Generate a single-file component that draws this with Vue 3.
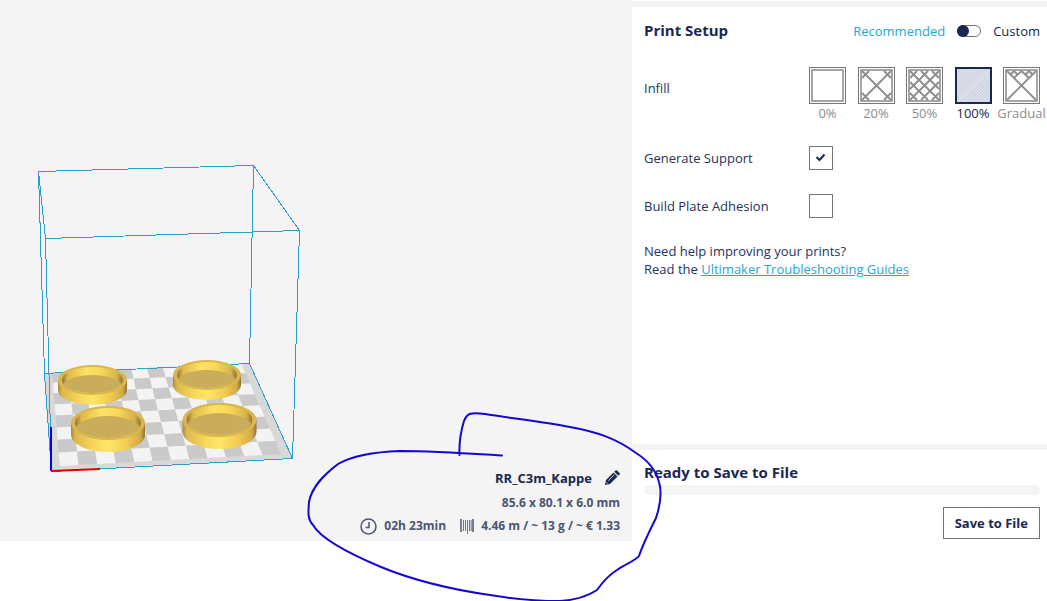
<template>
  <div class="page">
    <section class="viewport">
      <svg class="scene" width="310" height="480" viewBox="0 0 310 480" role="img" aria-label="Build plate">
        <defs>
          <linearGradient id="wall">
            <stop offset="0" stop-color="#a88a3c" />
            <stop offset="0.06" stop-color="#dcb84c" />
            <stop offset="0.3" stop-color="#f6d65a" />
            <stop offset="0.5" stop-color="#ffe668" />
            <stop offset="0.75" stop-color="#f2cc50" />
            <stop offset="0.94" stop-color="#d0aa47" />
            <stop offset="1" stop-color="#8d7236" />
          </linearGradient>
          <linearGradient id="inner">
            <stop offset="0" stop-color="#8d7236" />
            <stop offset="0.1" stop-color="#e0ba4c" />
            <stop offset="0.4" stop-color="#fde265" />
            <stop offset="0.65" stop-color="#f8d85a" />
            <stop offset="0.9" stop-color="#d8b24a" />
            <stop offset="1" stop-color="#8d7236" />
          </linearGradient>
          <clipPath v-for="(ring, i) in rings" :id="'hole' + i" :key="i">
            <ellipse :cx="ring.x" :cy="ring.y" :rx="ring.rx - 4" :ry="ring.ry - 2" />
          </clipPath>
        </defs>

        <polygon points="44,373 249,363 292,458 51,471" fill="#d8d8d8" />
        <polygon v-for="cell in cells" :key="cell.key" :points="cell.points" :fill="cell.fill" />

        <g class="volume">
          <path d="M38.5 171.5L253.5 165.5L299.5 230.5L45.5 238.5Z" />
          <path d="M44.5 373.5L249.5 363.5L292.5 458.5L51.5 471.5Z" />
          <path d="M38.5 171.5L44.5 373.5M253.5 165.5L249.5 363.5M299.5 230.5L292.5 458.5M45.5 238.5L51.5 471.5" />
        </g>
        <path class="axis" d="M51 427V471" stroke="#0000e0" />
        <path class="axis" d="M51 471L100 469" stroke="#e00000" />

        <g v-for="(ring, i) in rings" :key="'ring' + i">
          <path :d="wallPath(ring)" fill="url(#wall)" />
          <ellipse :cx="ring.x" :cy="ring.y" :rx="ring.rx" :ry="ring.ry" fill="#d9b64f" />
          <g :clip-path="'url(#hole' + i + ')'">
            <rect :x="ring.x - ring.rx + 4" :y="ring.y - ring.ry" :width="ring.rx * 2 - 8" :height="ring.ry * 2"
              fill="url(#inner)" />
            <ellipse :cx="ring.x" :cy="ring.y + 8" :rx="ring.rx - 4" :ry="ring.ry - 2" fill="#c9ad5a" />
          </g>
        </g>
      </svg>

      <div class="job-info">
        <div class="job-name">
          <span>RR_C3m_Kappe</span>
          <button class="edit-btn" type="button" aria-label="Rename">
            <svg width="16" height="16" viewBox="0 0 16 16" fill="currentColor">
              <path d="M1 15l1-5 7.500-7.500 4 4L6 14z" />
              <path d="M10.300 1.700L11.500.5q.8-.7 1.600 0l2.400 2.400q.7.800 0 1.600l-1.200 1.200z" />
              <path d="M4.200 10.800l6-6" stroke="#f4f4f4" stroke-width="0.800" />
              <path d="M2.300 12.300l1.400 1.400" stroke="#f4f4f4" stroke-width="0.800" />
            </svg>
          </button>
        </div>
        <div class="job-size">85.6 x 80.1 x 6.0 mm</div>
        <div class="job-stats">
          <svg width="17" height="17" viewBox="0 0 17 17" fill="none" stroke="currentColor" stroke-width="1.500">
            <circle cx="8.500" cy="8.500" r="7.500" />
            <path d="M9 4v5.500H5.500" />
          </svg>
          <span class="job-time">02h 23min</span>
          <svg width="14" height="16" viewBox="0 0 14 16" fill="none" stroke="currentColor">
            <path d="M1 1v13M13 1v13" stroke-width="1.500" />
            <path d="M3.500 2v11M5.500 2v11M7.500 2v14M9.500 2v11M11.200 2v11" stroke-width="0.800" />
          </svg>
          <span>4.46 m / ~ 13 g / ~ € 1.33</span>
        </div>
      </div>
    </section>

    <aside class="sidebar">
      <section class="setup">
        <header class="setup-header">
          <h2>Print Setup</h2>
          <label class="mode">
            <span class="mode-active">Recommended</span>
            <input v-model="custom" class="switch" type="checkbox" />
            <span>Custom</span>
          </label>
        </header>

        <div class="row infill-row">
          <span>Infill</span>
          <div class="infill-list">
            <label v-for="item in infills" :key="item.label" class="infill"
              :class="{ selected: item.label === infill }">
              <span class="infill-box">
                <input v-if="item.label !== 'Gradual'" v-model="infill" type="radio" name="infill"
                  :value="item.label" />
                <input v-else v-model="gradual" type="checkbox" />
                <svg width="37" height="37" viewBox="0 0 37 37" fill="none">
                  <rect v-if="item.label === '100%'" x="2" y="2" width="33" height="33" fill="#d0d4de" />
                  <rect v-else x="3" y="3" width="31" height="31" stroke="#888" stroke-width="1.500" />
                  <path :d="item.path" :stroke="item.label === '100%' ? '#e4e7ed' : '#8c8c8c'"
                    :stroke-width="item.label === '100%' ? 1 : 1.8" />
                </svg>
              </span>
              <span>{{ item.label }}</span>
            </label>
          </div>
        </div>

        <div class="row check-row">
          <label for="support">Generate Support</label>
          <span class="check-box">
            <input id="support" v-model="support" type="checkbox" />
            <svg v-if="support" width="24" height="24" viewBox="0 0 24 24" fill="none" stroke="#192850"
              stroke-width="2">
              <path d="M7.500 11l3 3 5-5.500" />
            </svg>
          </span>
        </div>
        <div class="row check-row">
          <label for="adhesion">Build Plate Adhesion</label>
          <span class="check-box">
            <input id="adhesion" v-model="adhesion" type="checkbox" />
          </span>
        </div>

        <p class="help">
          Need help improving your prints?<br />
          Read the <a href="#">Ultimaker Troubleshooting Guides</a>
        </p>
      </section>

      <section class="save">
        <h2>Ready to Save to File</h2>
        <div class="progress"></div>
        <button class="save-btn" type="button">Save to File</button>
      </section>
    </aside>

    <svg class="pen" width="1047" height="601" viewBox="0 0 1047 601" aria-hidden="true">
      <path
        d="M502 455.500C470 453.500 435 451 400 451C372 452 352 456 338 464C325 474 312 486 309 502C308 514 308 520 313 525C321 539 350 554 381 567C420 583 455 590 490 595C520 600 545 601 560 601C576 600 588 596 597 590C604 580 609 575 617 570C626 564 636 560 639 556C643 544 650 530 656 518C661 503 662 492 659 482C655 467 644 458 636 453C617 439 598 432 570 427C545 422 510 418 485 414C471 412 467 413 464 421C460 434 459 444 459.500 455" />
    </svg>
  </div>
</template>

<script setup>
import { ref } from 'vue'

const custom = ref(false)
const infill = ref('100%')
const gradual = ref(false)
const support = ref(true)
const adhesion = ref(false)

const solidLines = () => {
  let d = ''
  for (let i = 6; i < 66; i += 3) {
    const a = Math.max(2, i - 33)
    const b = Math.min(35, i + 2)
    d += `M${a} ${b}L${b} ${a}`
  }
  return d
}

const infills = [
  { label: '0%', path: '' },
  { label: '20%', path: 'M4 4L33 33M33 4L4 33M4 11L11 4M26 4L33 11M4 26L11 33M26 33L33 26' },
  {
    label: '50%',
    path: 'M4 4L33 33M33 4L4 33M15 4L33 22M26 4L33 11M4 15L22 33M4 26L11 33M22 4L4 22M11 4L4 11M33 15L15 33M33 26L26 33'
  },
  { label: '100%', path: solidLines() },
  { label: 'Gradual', path: 'M4 4L33 33M33 4L4 33M18.500 4L11 11M18.500 4L26 11M11 4L7.500 7.500M11 4L15 8M26 4L22 8M26 4L29.500 7.500' }
]

const rings = [
  { x: 207, y: 375, rx: 34, ry: 15, h: 10 },
  { x: 92.5, y: 380, rx: 34.5, ry: 15, h: 10 },
  { x: 219.5, y: 420, rx: 37, ry: 17, h: 12 },
  { x: 108, y: 423, rx: 37, ry: 17, h: 12 }
]

const wallPath = ({ x, y, rx, ry, h }) =>
  `M${x - rx} ${y}v${h}a${rx} ${ry} 0 0 0 ${rx * 2} 0v${-h}z`

// perspective mapping of the unit square onto the build plate
const corners = [[44, 373], [249, 363], [292, 458], [51, 471]]

const project = (u, v) => {
  const [[x0, y0], [x1, y1], [x2, y2], [x3, y3]] = corners
  const dx1 = x1 - x2
  const dx2 = x3 - x2
  const dx3 = x0 - x1 + x2 - x3
  const dy1 = y1 - y2
  const dy2 = y3 - y2
  const dy3 = y0 - y1 + y2 - y3
  const det = dx1 * dy2 - dx2 * dy1
  const g = (dx3 * dy2 - dx2 * dy3) / det
  const h = (dx1 * dy3 - dx3 * dy1) / det
  const w = g * u + h * v + 1
  const x = ((x1 - x0 + g * x1) * u + (x3 - x0 + h * x3) * v + x0) / w
  const y = ((y1 - y0 + g * y1) * u + (y3 - y0 + h * y3) * v + y0) / w
  return `${x.toFixed(1)},${y.toFixed(1)}`
}

const cells = []
for (let r = 0; r < 8; r++) {
  for (let c = 0; c < 12; c++) {
    const u = (c + 0.5) / 13
    const v = r * 0.12
    cells.push({
      key: `${r}-${c}`,
      fill: (r + c) % 2 === 0 ? '#cacaca' : '#f3f3f3',
      points: [
        project(u, v),
        project(u + 1 / 13, v),
        project(u + 1 / 13, v + 0.12),
        project(u, v + 0.12)
      ].join(' ')
    })
  }
}
</script>

<style>
body {
  margin: 0;
  background: #fff;
}
</style>

<style scoped>
.page {
  position: relative;
  display: grid;
  grid-template-columns: minmax(0, 1fr) 415px;
  align-items: start;
  min-height: 100vh;
  overflow: hidden;
  font-family: "Open Sans", "Noto Sans", sans-serif;
  font-size: 13px;
  line-height: 18px;
  color: #26335a;
}

.viewport {
  display: flex;
  justify-content: space-between;
  align-items: flex-end;
  background: #f4f4f4;
  padding: 0 12px 6px 0;
  min-height: 535px;
}

.scene {
  align-self: flex-start;
  flex: none;
}

.volume {
  fill: none;
  stroke: #2a9fce;
  shape-rendering: crispEdges;
}

.axis {
  fill: none;
  stroke-width: 2;
}

.job-info {
  display: flex;
  flex-direction: column;
  align-items: flex-end;
  gap: 5px;
  font-size: 12px;
  font-weight: 700;
  color: #4a5672;
  white-space: nowrap;
}

.job-name {
  display: flex;
  align-items: center;
  gap: 12px;
  margin-bottom: 2px;
  font-size: 13px;
  color: #192850;
}

.edit-btn {
  display: flex;
  padding: 0;
  border: none;
  background: none;
  color: #192850;
  cursor: pointer;
}

.job-stats {
  display: flex;
  align-items: center;
  gap: 7px;
}

.job-time {
  margin-right: 7px;
}

h2 {
  margin: 0;
  font-size: 15px;
  line-height: 20px;
  font-weight: 700;
  color: #192850;
}

.setup {
  box-sizing: border-box;
  min-height: 449px;
  margin-top: 1px;
  padding: 13px 7px 0 12px;
  border-top: 6px solid #f4f4f4;
  border-bottom: 6px solid #f4f4f4;
}

.setup-header,
.mode {
  display: flex;
  align-items: center;
  justify-content: space-between;
}

.mode {
  gap: 12px;
  padding-top: 2px;
  color: #192850;
}

.mode-active {
  color: #2aa5d1;
}

.switch {
  appearance: none;
  width: 24px;
  height: 12px;
  margin: 0;
  border: 1px solid #777;
  border-radius: 6px;
  background: #fff;
}

.switch::before {
  content: "";
  display: block;
  width: 12px;
  height: 12px;
  margin: -1px;
  border-radius: 50%;
  background: #192850;
}

.switch:checked::before {
  margin-left: 11px;
}

.row {
  display: grid;
  grid-template-columns: 165px minmax(0, 1fr);
  align-items: center;
}

.infill-row {
  align-items: start;
  padding-top: 27px;
}

.infill-row > span {
  padding-top: 12px;
}

.infill-list {
  display: flex;
  justify-content: space-between;
}

.infill {
  display: flex;
  flex-direction: column;
  align-items: center;
  width: 37px;
  white-space: nowrap;
  color: #8c8c8c;
}

.infill-box,
.check-box {
  display: grid;
}

.infill-box > *,
.check-box > * {
  grid-area: 1 / 1;
}

.infill-box svg,
.check-box svg {
  pointer-events: none;
}

.infill-box input,
.check-box input {
  appearance: none;
  box-sizing: border-box;
  width: 37px;
  height: 37px;
  margin: 0;
  border: 1px solid #777;
  border-radius: 0;
  background: #fff;
  cursor: pointer;
}

.check-box input {
  width: 24px;
  height: 24px;
}

.infill.selected {
  color: #192850;
}

.infill.selected input {
  border: 2px solid #192850;
}

.check-row {
  margin-top: 24px;
}

.help {
  margin: 24px 0 0;
}

.help a {
  color: #2aa5d1;
}

.save {
  display: flex;
  flex-direction: column;
  padding: 12px 7px 0 12px;
}

.progress {
  height: 10px;
  margin-top: 3px;
  border-radius: 5px;
  background: #f4f4f4;
}

.save-btn {
  align-self: flex-end;
  height: 32px;
  margin-top: 12px;
  padding: 0 11px;
  border: 1px solid #777;
  background: #fff;
  color: #192850;
  font-family: inherit;
  font-size: 13px;
  font-weight: 700;
  cursor: pointer;
}

.pen {
  position: absolute;
  top: 0;
  left: 0;
  fill: none;
  stroke: #1405d2;
  stroke-width: 2;
  stroke-linecap: round;
  pointer-events: none;
}
</style>
